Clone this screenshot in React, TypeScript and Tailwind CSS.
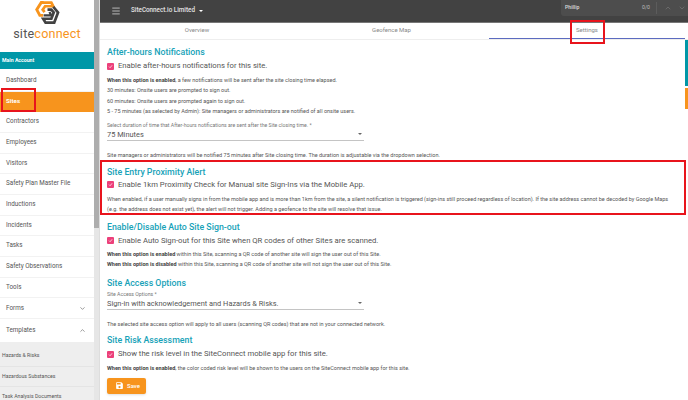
import { ChevronDown, ChevronUp, Menu } from "lucide-react";

const navItems = [
  "Dashboard",
  "Sites",
  "Contractors",
  "Employees",
  "Visitors",
  "Safety Plan Master File",
  "Inductions",
  "Incidents",
  "Tasks",
  "Safety Observations",
  "Tools",
];

const subItems = ["Hazards & Risks", "Hazardous Substances", "Task Analysis Documents"];

function Logo() {
  return (
    <div className="flex h-[52px] flex-col items-center pt-px">
      <svg width="25" height="24" viewBox="0 0 26 25" fill="none" className="shrink-0">
        <path d="M9 1.6H6.5L1.8 9L5 15H8.5" stroke="#f7941d" strokeWidth="3" />
        <path d="M6.5 1.6H17L19 5.5H10.5L8 9L10 11.5" stroke="#f7941d" strokeWidth="2.8" />
        <path d="M9 15H17L15 11.5" stroke="#424242" strokeWidth="2.4" />
        <path d="M19 6L24 12L20 22.5H11L8.5 18.5H17L19.5 12L17 9H13" stroke="#424242" strokeWidth="2.8" />
      </svg>
      <div className="mt-[2px] text-[12.6px] leading-[14px] tracking-[0.2px]">
        <span className="text-[#555555]">site</span>
        <span className="text-[#f7941d]">connect</span>
      </div>
    </div>
  );
}

function Sidebar() {
  return (
    <aside className="relative h-full w-[94px] shrink-0 overflow-hidden bg-white">
      <Logo />
      <div className="flex h-[17px] items-center bg-[#0097a7] px-[2px] text-[5.2px] font-bold text-white">
        Main Account
      </div>
      <nav className="pt-[2px]">
        {navItems.map((item) => (
          <div
            key={item}
            className={
              item === "Sites"
                ? "flex h-[20.67px] items-center bg-[#f7941d] px-[6px] text-[6.2px] font-bold text-white"
                : "flex h-[20.67px] items-center border-b border-[#f2f2f2] px-[6px] text-[6.3px] text-[#555555]"
            }
          >
            {item}
          </div>
        ))}
        <div className="flex h-[21px] items-center justify-between border-b border-[#f2f2f2] pl-[6px] pr-[8px] text-[6.3px] text-[#555555]">
          Forms
          <ChevronDown size={7} />
        </div>
        <div className="flex h-[23px] items-center justify-between pl-[6px] pr-[8px] text-[6.3px] text-[#555555]">
          Templates
          <ChevronUp size={7} />
        </div>
        <div className="bg-[#eeeeee] pt-[4px]">
          {subItems.map((item) => (
            <div
              key={item}
              className="flex h-[20.5px] items-center border-b border-[#e4e4e4] px-[2px] text-[5.2px] text-[#555555]"
            >
              {item}
            </div>
          ))}
        </div>
      </nav>
      {/* marker around Sites */}
      <div className="absolute top-[88px] left-px h-[24px] w-[35px] border-[2px] border-[#e8141c]" />
    </aside>
  );
}

function Check({ label, tight }: { label: string; tight?: boolean }) {
  return (
    <div className={`${tight ? "" : "mt-px"} flex h-[14px] items-center gap-[4px] text-[7.7px] text-[#555555]`}>
      <span className="flex h-[7px] w-[7px] items-center justify-center rounded-[1px] bg-[#ec407a]">
        <svg width="5" height="5" viewBox="0 0 10 10" fill="none">
          <path d="M2 5.2L4.2 7.4L8.2 2.6" stroke="white" strokeWidth="1.4" />
        </svg>
      </span>
      {label}
    </div>
  );
}

function Title({ children }: { children: string }) {
  return <h2 className="text-[8.8px] leading-[12px] font-medium text-[#17a2b8]">{children}</h2>;
}

function Note({ bold, children }: { bold?: string; children?: string }) {
  return (
    <p className="h-[10.4px] text-[5.5px] leading-[10.4px] whitespace-nowrap text-[#555555]">
      {bold && <b className="font-bold text-[#444444]">{bold}</b>}
      {children}
    </p>
  );
}

function SelectField({ label, value, width }: { label: string; value: string; width: string }) {
  return (
    <div className={`${width} border-b border-[#c4c4c4]`}>
      <div className="h-[8px] text-[5.2px] leading-[8px] text-[#777777]">{label}</div>
      <div className="flex h-[11px] items-center justify-between pr-[1px] text-[7.4px] text-[#555555]">
        {value}
        <span className="mr-px h-0 w-0 border-x-[2.5px] border-t-[2.5px] border-x-transparent border-t-[#666666]" />
      </div>
    </div>
  );
}

function Tabs() {
  return (
    <div className="relative flex h-[17px] shrink-0 border-b border-[#eeeeee] text-[6px] text-[#888888]">
      <div className="flex w-[194px] items-center justify-center pb-[3px]">Overview</div>
      <div className="flex w-[195px] items-center justify-center pb-[3px]">Geofence Map</div>
      <div className="flex w-[196px] items-center justify-center border-b-[1px] border-[#5c6bc0] pb-[3px]">
        Settings
      </div>
      <div className="absolute top-[-3px] left-[470px] h-[24px] w-[35px] border-[2px] border-[#e8141c]" />
    </div>
  );
}

export default function App() {
  return (
    <div className="relative flex h-[400px] w-[688px] overflow-hidden bg-white font-['Roboto',sans-serif]">
      <Sidebar />
      <div className="w-[5px] shrink-0 bg-[#e6e6e6]">
        <div className="h-[228px] w-[5px] bg-[#adadad]" />
      </div>
      <div className="flex min-w-0 flex-1 flex-col border-l border-[#dddddd]">
        <header className="flex h-[23px] shrink-0 items-center border-b border-[#777777] bg-[#424242] pl-[11px] text-[6.3px] font-medium text-[#e4e4e4]">
          <Menu size={10} className="text-[#d0d0d0]" />
          <span className="ml-[10px]">SiteConnect.io Limited</span>
          <span className="ml-[4px] h-0 w-0 border-x-[2.5px] border-t-[2.5px] border-x-transparent border-t-white" />
        </header>
        <Tabs />
        <main className="relative min-h-0 flex-1 overflow-hidden pt-[6px] pl-[7px]">
          <Title>After-hours Notifications</Title>
          <Check label="Enable after-hours notifications for this site." />
          <div className="pt-[2px]">
            <Note bold="When this option is enabled">, a few notifications will be sent after the site closing time elapsed.</Note>
            <Note>30 minutes: Onsite users are prompted to sign out.</Note>
            <Note>60 minutes: Onsite users are prompted again to sign out.</Note>
            <Note>5 - 75 minutes (as selected by Admin): Site managers or administrators are notified of all onsite users.</Note>
          </div>
          <div className="mt-[4px]">
            <SelectField
              label="Select duration of time that After-hours notifications are sent after the Site closing time. *"
              value="75 Minutes"
              width="w-[257px]"
            />
          </div>
          <div className="mt-[9px]">
            <Note>Site managers or administrators will be notified 75 minutes after Site closing time. The duration is adjustable via the dropdown selection.</Note>
          </div>
          <section className="-ml-[7px] h-[55px] w-[586px] border-[2px] border-[#e8141c] pt-[4px] pl-[5px]">
            <Title>Site Entry Proximity Alert</Title>
            <Check tight label="Enable 1km Proximity Check for Manual site Sign-Ins via the Mobile App." />
            <div className="pt-[2px]">
              <Note>When enabled, if a user manually signs in from the mobile app and is more than 1km from the site, a silent notification is triggered (sign-ins still proceed regardless of location). If the site address cannot be decoded by Google Maps</Note>
              <Note>(e.g. the address does not exist yet), the alert will not trigger. Adding a geofence to the site will resolve that issue.</Note>
            </div>
          </section>
          <div className="mt-[6px]">
            <Title>Enable/Disable Auto Site Sign-out</Title>
          </div>
          <Check label="Enable Auto Sign-out for this Site when QR codes of other Sites are scanned." />
          <div className="pt-px">
            <Note bold="When this option is enabled"> within this Site, scanning a QR code of another site will sign the user out of this Site.</Note>
            <Note bold="When this option is disabled"> within this Site, scanning a QR code of another site will not sign the user out of this Site.</Note>
          </div>
          <div className="mt-[7px]">
            <Title>Site Access Options</Title>
          </div>
          <div className="mt-[1px]">
            <SelectField label="Site Access Options *" value="Sign-in with acknowledgement and Hazards & Risks." width="w-[257px]" />
          </div>
          <div className="mt-[9px]">
            <Note>The selected site access option will apply to all users (scanning QR codes) that are not in your connected network.</Note>
          </div>
          <div className="mt-[5px]">
            <Title>Site Risk Assessment</Title>
          </div>
          <Check label="Show the risk level in the SiteConnect mobile app for this site." />
          <div className="pt-[2px]">
            <Note bold="When this option is enabled">, the color coded risk level will be shown to the users on the SiteConnect mobile app for this site.</Note>
          </div>
          <button className="mt-[4px] flex h-[16px] w-[39px] items-center gap-[3px] rounded-[2px] bg-[#f7941d] pl-[8px] text-[6px] font-medium text-white shadow-sm">
            <svg width="9" height="9" viewBox="0 0 24 24" fill="white">
              <path d="M17 3H5a2 2 0 0 0-2 2v14a2 2 0 0 0 2 2h14a2 2 0 0 0 2-2V7l-4-4zm-5 16a3 3 0 1 1 0-6 3 3 0 0 1 0 6zm3-10H5V5h10v4z" />
            </svg>
            Save
          </button>
          <div className="absolute top-0 right-0 flex h-full w-[3px] flex-col">
            <div className="h-[46px] bg-[#0097a7]" />
            <div className="mt-[2px] h-[21px] bg-[#f7941d]" />
          </div>
        </main>
      </div>
      <div className="absolute top-0 right-0 flex h-[16px] w-[127px] items-center rounded-bl-[3px] bg-[#4d4d4d] pl-[4px] text-[5.2px] text-[#dddddd]">
        <span className="font-medium">Phillip</span>
        <span className="ml-auto text-[#bbbbbb]">0/0</span>
        <span className="ml-[6px] h-[12px] w-px bg-[#5c5c5c]" />
        <ChevronUp size={8} className="ml-[7px] text-[#777777]" />
        <ChevronDown size={8} className="mr-[2px] ml-[6px] text-[#777777]" />
      </div>
    </div>
  );
}
